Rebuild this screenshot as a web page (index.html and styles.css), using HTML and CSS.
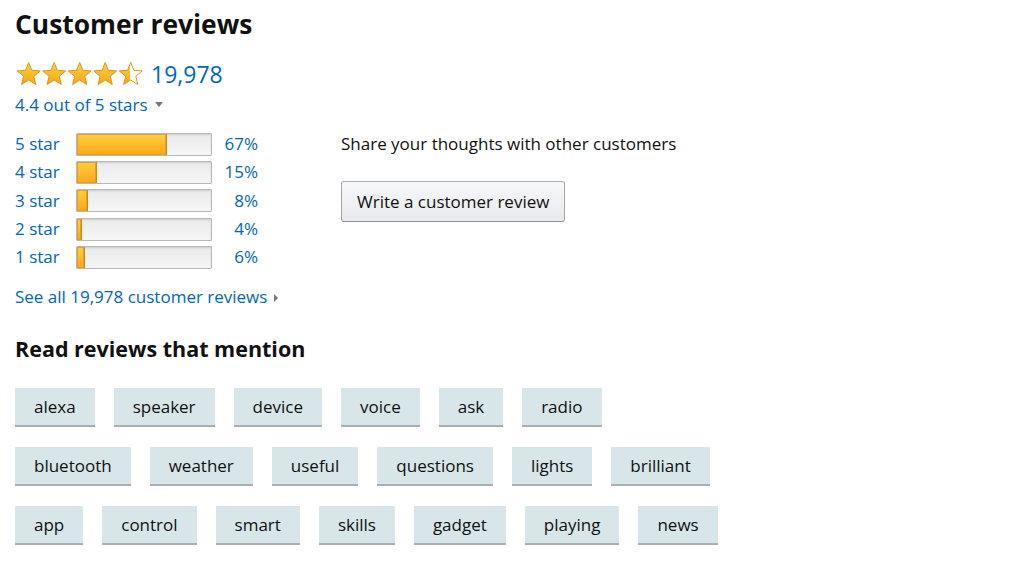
FILE: index.html
```html
<!DOCTYPE html>
<html lang="en">
<head>
    <meta charset="UTF-8">
    <title>Customer reviews</title>
    <link rel="stylesheet" href="styles.css">
</head>
<body>
    <h2 class="title">Customer reviews</h2>

    <div class="summary">
        <svg class="stars" width="130" height="28" viewBox="0 0 130 28">
            <defs>
                <linearGradient id="gold" x1="0" y1="0" x2="0" y2="1">
                    <stop offset="0" stop-color="#ffd33d"/>
                    <stop offset="1" stop-color="#f7a41d"/>
                </linearGradient>
                <clipPath id="half">
                    <rect x="0" y="0" width="12" height="28"/>
                </clipPath>
                <path id="star" d="M12.7 1.5 L15.9 9.3 L24.2 9.9 L17.8 15.3 L19.8 23.5 L12.7 19 L5.6 23.5 L7.6 15.3 L1.2 9.9 L9.5 9.3 Z"/>
            </defs>
            <use href="#star" x="1" y="1" fill="url(#gold)" stroke="#d89a1e" stroke-width="1"/>
            <use href="#star" x="26.5" y="1" fill="url(#gold)" stroke="#d89a1e" stroke-width="1"/>
            <use href="#star" x="52" y="1" fill="url(#gold)" stroke="#d89a1e" stroke-width="1"/>
            <use href="#star" x="77.5" y="1" fill="url(#gold)" stroke="#d89a1e" stroke-width="1"/>
            <g transform="translate(103 1)">
                <use href="#star" fill="#fff"/>
                <use href="#star" fill="url(#gold)" clip-path="url(#half)"/>
                <use href="#star" fill="none" stroke="#d89a1e" stroke-width="1"/>
            </g>
        </svg>
        <a class="count" href="#">19,978</a>
    </div>
    <a class="out-of" href="#">4.4 out of 5 stars <span class="caret"></span></a>

    <div class="columns">
        <div class="histogram">
            <div class="row">
                <a href="#" class="label">5 star</a>
                <div class="bar"><div class="fill" style="width: 67%"></div></div>
                <a href="#" class="pct">67%</a>
            </div>
            <div class="row">
                <a href="#" class="label">4 star</a>
                <div class="bar"><div class="fill" style="width: 15%"></div></div>
                <a href="#" class="pct">15%</a>
            </div>
            <div class="row">
                <a href="#" class="label">3 star</a>
                <div class="bar"><div class="fill" style="width: 8%"></div></div>
                <a href="#" class="pct">8%</a>
            </div>
            <div class="row">
                <a href="#" class="label">2 star</a>
                <div class="bar"><div class="fill" style="width: 4%"></div></div>
                <a href="#" class="pct">4%</a>
            </div>
            <div class="row">
                <a href="#" class="label">1 star</a>
                <div class="bar"><div class="fill" style="width: 6%"></div></div>
                <a href="#" class="pct">6%</a>
            </div>
            <a class="see-all" href="#">See all 19,978 customer reviews <span class="arrow"></span></a>
        </div>

        <div class="write">
            <p>Share your thoughts with other customers</p>
            <button>Write a customer review</button>
        </div>
    </div>

    <h3 class="mention-title">Read reviews that mention</h3>
    <div class="tags">
        <div class="tag-row">
            <span class="tag">alexa</span>
            <span class="tag">speaker</span>
            <span class="tag">device</span>
            <span class="tag">voice</span>
            <span class="tag">ask</span>
            <span class="tag">radio</span>
        </div>
        <div class="tag-row">
            <span class="tag">bluetooth</span>
            <span class="tag">weather</span>
            <span class="tag">useful</span>
            <span class="tag">questions</span>
            <span class="tag">lights</span>
            <span class="tag">brilliant</span>
        </div>
        <div class="tag-row">
            <span class="tag">app</span>
            <span class="tag">control</span>
            <span class="tag">smart</span>
            <span class="tag">skills</span>
            <span class="tag">gadget</span>
            <span class="tag">playing</span>
            <span class="tag">news</span>
        </div>
    </div>
</body>
</html>
```

FILE: styles.css
```css
body {
    margin: 0;
    padding: 0 15px;
    font-family: "Open Sans", Arial, sans-serif;
    font-size: 17px;
    line-height: 22px;
    color: #111;
    background: #fff;
}
a {
    color: #0066c0;
    text-decoration: none;
}
.title {
    font-size: 26.4px;
    font-weight: 700;
    margin: 6px 0 0;
    line-height: 36px;
}
.summary {
    display: flex;
    align-items: center;
    margin-top: 18px;
    height: 28px;
}
.stars {
    display: block;
}
.count {
    font-size: 23px;
    margin-left: 6px;
}
.out-of {
    display: inline-block;
    margin-top: 6px;
}
.caret {
    display: inline-block;
    width: 0;
    height: 0;
    border-left: 4px solid transparent;
    border-right: 4px solid transparent;
    border-top: 5px solid #777;
    vertical-align: 4px;
    margin-left: 3px;
}
.columns {
    display: flex;
    margin-top: 14px;
}
.histogram {
    width: 326px;
}
.row {
    display: flex;
    align-items: center;
    height: 28.3px;
}
.label {
    width: 61px;
}
.bar {
    width: 134px;
    height: 21px;
    border: 1px solid #b8b8b8;
    border-radius: 1px;
    background: linear-gradient(#eaeaea, #f6f6f6);
    box-shadow: inset 0 1px 2px rgba(0, 0, 0, 0.12);
}
.fill {
    height: 100%;
    box-sizing: border-box;
    background: linear-gradient(#ffcf3e, #ffa616);
    border-right: 1px solid #c98a14;
    box-shadow: inset 0 0 0 1px #e0a02a;
}
.pct {
    width: 46px;
    text-align: right;
}
.see-all {
    display: inline-block;
    margin-top: 15px;
}
.arrow {
    display: inline-block;
    width: 0;
    height: 0;
    border-top: 4px solid transparent;
    border-bottom: 4px solid transparent;
    border-left: 4px solid #777;
    margin-left: 2px;
    vertical-align: 1px;
}
.write {
    padding-top: 3px;
}
.write p {
    margin: 0;
}
.write button {
    margin-top: 26px;
    height: 41px;
    padding: 0 15px;
    font-family: inherit;
    font-size: 17px;
    color: #111;
    background: linear-gradient(#f7f8fa, #e7e9ec);
    border: 1px solid #adb1b8;
    border-color: #adb1b8 #a2a6ac #8d9096;
    border-radius: 3px;
    cursor: pointer;
}
.mention-title {
    font-size: 21.5px;
    font-weight: 700;
    margin: 26px 0 0;
    line-height: 30px;
}
.tags {
    margin-top: 24px;
}
.tag-row {
    display: flex;
    gap: 19px;
    margin-bottom: 20px;
}
.tag {
    display: inline-block;
    height: 37px;
    line-height: 37px;
    padding: 0 19px;
    background: #d8e6e9;
    border-bottom: 2px solid #a7b0b4;
    color: #111;
}
```
